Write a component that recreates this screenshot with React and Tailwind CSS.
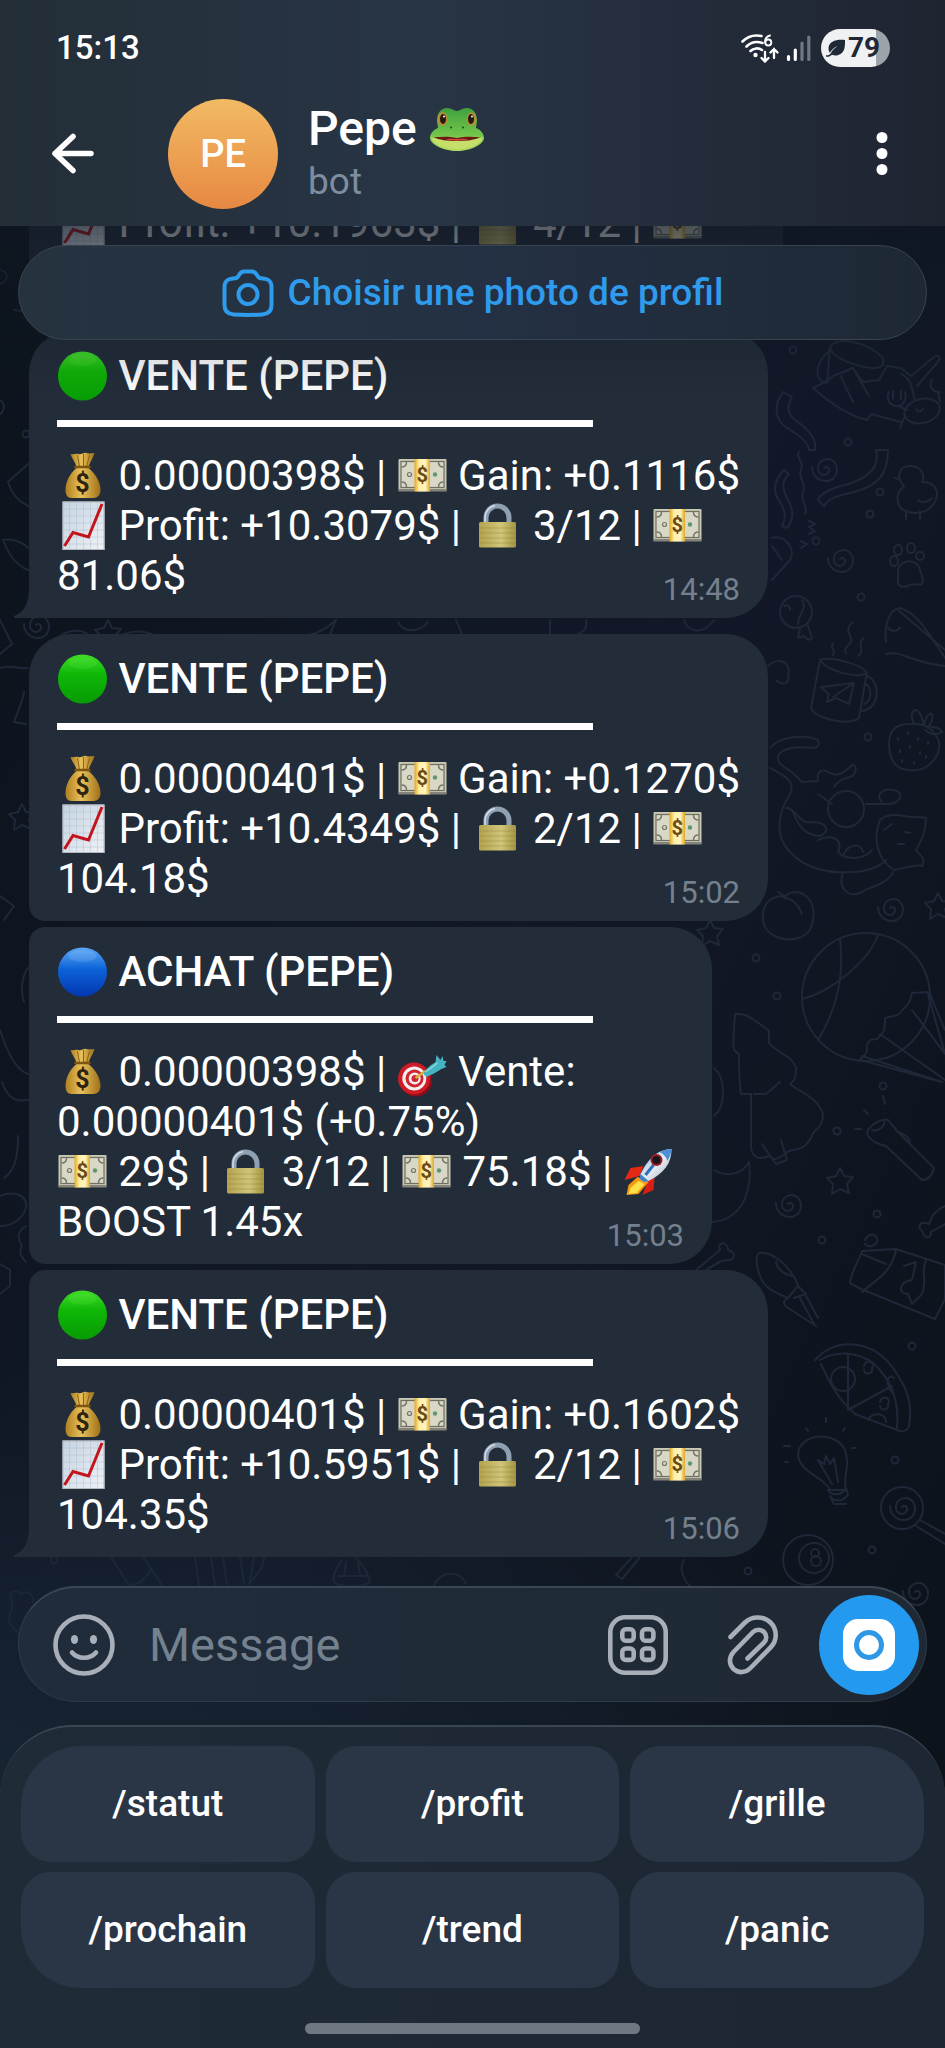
import React from 'react';

const messages = [
    // Scrolled out: only this line still shows under the header
    {
        id: 'm0',
        lines: [['chart', ' Profit: +10.1963$ | ', 'lock', ' 4/12 | ', 'cash', '     ']],
        shape: 'rounded-[42px]',
        gap: '',
    },
    {
        id: 'm1',
        dot: 'green',
        title: 'VENTE (PEPE)',
        lines: [
            ['bag', ' 0.00000398$ | ', 'cash', ' Gain: +0.1116$'],
            ['chart', ' Profit: +10.3079$ | ', 'lock', ' 3/12 | ', 'cash'],
        ],
        last: '81.06$',
        time: '14:48',
        shape: 'rounded-[42px] rounded-bl-none',
        tail: true,
        gap: 'mt-4',
    },
    {
        id: 'm2',
        dot: 'green',
        title: 'VENTE (PEPE)',
        lines: [
            ['bag', ' 0.00000401$ | ', 'cash', ' Gain: +0.1270$'],
            ['chart', ' Profit: +10.4349$ | ', 'lock', ' 2/12 | ', 'cash'],
        ],
        last: '104.18$',
        time: '15:02',
        shape: 'rounded-[42px] rounded-bl-[16px]',
        gap: 'mt-4',
    },
    {
        id: 'm3',
        dot: 'blue',
        title: 'ACHAT (PEPE)',
        lines: [
            ['bag', ' 0.00000398$ | ', 'dart', ' Vente:'],
            ['0.00000401$ (+0.75%)'],
            ['cash', ' 29$ | ', 'lock', ' 3/12 | ', 'cash', ' 75.18$ | ', 'rocket', ' '],
        ],
        last: 'BOOST 1.45x',
        time: '15:03',
        shape: 'rounded-[42px] rounded-l-[16px]',
        gap: 'mt-[6px]',
    },
    {
        id: 'm4',
        dot: 'green',
        title: 'VENTE (PEPE)',
        lines: [
            ['bag', ' 0.00000401$ | ', 'cash', ' Gain: +0.1602$'],
            ['chart', ' Profit: +10.5951$ | ', 'lock', ' 2/12 | ', 'cash'],
        ],
        last: '104.35$',
        time: '15:06',
        shape: 'rounded-[42px] rounded-tl-[16px] rounded-bl-none',
        tail: true,
        gap: 'mt-[6px]',
    },
];

const commands = [
    { label: '/statut', corner: 'rounded-tl-[60px]' },
    { label: '/profit', corner: '' },
    { label: '/grille', corner: 'rounded-tr-[60px]' },
    { label: '/prochain', corner: 'rounded-bl-[60px]' },
    { label: '/trend', corner: '' },
    { label: '/panic', corner: 'rounded-br-[60px]' },
];

const glyphs = {
    green: (
        <>
            <circle cx="25" cy="25" r="24.5" fill="url(#dotGreen)" />
            <ellipse cx="25" cy="9" rx="14" ry="6" fill="#8dff6a" opacity="0.12" />
        </>
    ),
    blue: (
        <>
            <circle cx="25" cy="25" r="24.5" fill="url(#dotBlue)" />
            <ellipse cx="25" cy="9" rx="14" ry="6" fill="#c8e4ff" opacity="0.15" />
        </>
    ),
    bag: (
        <>
            <path d="M13 3c3 1 5 -1 8 0s5 -2 8 -1 5 0 8 0c-1 5-5 9-6 14h-12c-1-5-5-9-6-13z" fill="url(#bagFill)" />
            <path d="M20 4l2 12M26 3v13M32 4l-3 12" stroke="#8a6315" strokeWidth="1" fill="none" />
            <path d="M19 17c-6 5-11 13-11 22 0 5 2 8 6 8h22c4 0 7-3 7-8 0-9-6-17-12-22z" fill="url(#bagFill)" />
            <path d="M18 16h14" stroke="#7d5510" strokeWidth="2.5" strokeLinecap="round" />
            <text x="25" y="40.5" textAnchor="middle" fontSize="25" fontWeight="700" fill="#2f2410" fontFamily="Roboto, sans-serif">$</text>
        </>
    ),
    cash: (
        <>
            <rect x="1" y="8" width="48" height="32" rx="1" fill="#c9c8b4" />
            <path d="M1 38h48v2.500h-48z" fill="#85847a" />
            <rect x="3.500" y="10.500" width="43" height="26" fill="#d9d8c6" stroke="#6f6f62" strokeWidth="1.2" />
            <path d="M4 16c4 0 5-2 5-5M46 16c-4 0-5-2-5-5M4 31c4 0 5 2 5 5M46 31c-4 0-5 2-5 5" fill="none" stroke="#77766a" strokeWidth="1.500" />
            <circle cx="12" cy="23.500" r="2" fill="none" stroke="#77766a" strokeWidth="1.200" />
            <circle cx="37.500" cy="23.500" r="2.200" fill="#5f9673" />
            <rect x="17" y="8" width="15.500" height="32.500" fill="url(#bandFill)" />
            <text x="24.800" y="31" textAnchor="middle" fontSize="20" fontWeight="700" fill="#6a4a16" fontFamily="Roboto, sans-serif">$</text>
        </>
    ),
    chart: (
        <>
            <rect x="5" y="0.500" width="42" height="48.500" fill="url(#chartFill)" />
            <path d="M12 1v48M19 1v48M26 1v48M33 1v48M40 1v48M5 8h42M5 15h42M5 22h42M5 29h42M5 36h42M5 43h42" stroke="#a9b7c6" strokeWidth="0.400" />
            <rect x="5.500" y="1" width="41" height="47.500" fill="none" stroke="#b3b8bf" />
            <path d="M7 45l8.500-13.500 15.500 4.500 13.500-33" fill="none" stroke="#c4141c" strokeWidth="3" />
        </>
    ),
    lock: (
        <>
            <path d="M13.500 23v-6.500a11.500 11.500 0 0 1 23 0v6.500" fill="none" stroke="#8fa0b2" strokeWidth="5" />
            <path d="M12.500 22v-5.500a12.500 12.500 0 0 1 10-12" fill="none" stroke="#d3deea" strokeWidth="1.500" />
            <rect x="6.500" y="21" width="37" height="25.500" rx="1.500" fill="url(#lockFill)" />
            <path d="M7 27h36M7 32h36M7 37h36M7 42h36" stroke="#8c7c33" strokeWidth="0.700" opacity="0.500" />
        </>
    ),
    dart: (
        <>
            <circle cx="18.500" cy="33.500" r="16" fill="#8f0d16" />
            <circle cx="16.500" cy="31.500" r="16" fill="#cf1a26" />
            <circle cx="16.800" cy="31.500" r="12" fill="#f3eeee" />
            <circle cx="17" cy="31.500" r="9" fill="#cf2631" />
            <circle cx="17.200" cy="31.500" r="6" fill="#f3eeee" />
            <circle cx="17.500" cy="31.500" r="3.500" fill="#cf2631" />
            <path d="M18 31l10-7" stroke="#d9b13c" strokeWidth="2.500" />
            <path d="M26 27c2-5 6-8 12-12l1-7 4 5 2-4 1 5 3 0-2 4 2 2-5 2c-5 3-10 6-15 8z" fill="#45b3c0" />
            <path d="M28 25l12-9" stroke="#8fdce4" strokeWidth="1.500" />
        </>
    ),
    rocket: (
        <>
            <path d="M20 19l-13 2-6 12 15-4z" fill="#e22a16" />
            <path d="M31 31l-1 12-11 5 5-14z" fill="#d81f14" />
            <path d="M14 30l-9 8-2 10 12-1 10-12z" fill="#f79a12" />
            <path d="M15 34l-8 7-2 6 8-1 8-9z" fill="#ffe14a" />
            <path d="M48 2c-13 1-22 7-31 25l-1 5 5 3 4-1c16-8 23-18 23-32z" fill="url(#rocketFill)" />
            <path d="M48 2c-4 0-8 1-12 3 3 1 7 5 8 9 2-4 4-8 4-12z" fill="#4d8fd6" />
            <path d="M17 27l-1 5 5 3 4-1z" fill="#3f7fc4" />
            <path d="M22 28l8-10" stroke="#2f6fb8" strokeWidth="3" />
            <circle cx="33" cy="13" r="6" fill="#9b1c24" />
            <circle cx="33" cy="13" r="4" fill="#15181f" />
        </>
    ),
    frog: (
        <>
            <path d="M8 15c0-8 4-13 10-13 5 0 7 3 10 3s5-3 10-3c6 0 10 5 10 13 0 2-1 5-1 7 5 2 8 6 8 10 0 6-13 13-27 13s-27-7-27-13c0-4 3-8 8-10 0-2-1-5-1-7z" fill="url(#frogFill)" />
            <ellipse cx="13.500" cy="13" rx="5" ry="6.800" fill="#b98d35" />
            <ellipse cx="42.500" cy="13" rx="5" ry="6.800" fill="#b98d35" />
            <ellipse cx="14" cy="13" rx="3" ry="5" fill="#231a10" />
            <ellipse cx="42" cy="13" rx="3" ry="5" fill="#231a10" />
            <circle cx="15" cy="10.500" r="1" fill="#fff" />
            <circle cx="43" cy="10.500" r="1" fill="#fff" />
            <path d="M2 31c6 3 15 1 26 2 11-1 20 1 26-2-2 9-15 12-26 12s-24-3-26-12z" fill="#c5df6a" />
            <path d="M5 31c7 0 14-1 23 1 9-2 16-1 23-1-5 3-13 4-23 4s-18-1-23-4z" fill="#6b1a14" />
            <path d="M17 33.500c4-1.500 7-.5 11-.5s7-1 11 .5c-6 1.500-16 1.500-22 0z" fill="#d8483d" />
            <circle cx="22" cy="21.500" r="1" fill="#1c4a1b" />
            <circle cx="34" cy="21.500" r="1" fill="#1c4a1b" />
        </>
    ),
};

const Emoji = ({ name, className = 'w-[51px] h-[50px]', viewBox = '0 0 50 50' }) => (
    <svg viewBox={viewBox} className={`inline-block align-top ${className}`} aria-hidden="true">
        {glyphs[name]}
    </svg>
);

// Gradients shared by every emoji
const EmojiDefs = () => (
    <svg className="absolute w-0 h-0" aria-hidden="true">
        <defs>
            <linearGradient id="dotGreen" x1="0" y1="0" x2="0" y2="1">
                <stop offset="0" stopColor="#3fdc28" />
                <stop offset="0.4" stopColor="#0fb806" />
                <stop offset="1" stopColor="#079a04" />
            </linearGradient>
            <linearGradient id="dotBlue" x1="0" y1="0" x2="0" y2="1">
                <stop offset="0" stopColor="#5ba8f5" />
                <stop offset="0.45" stopColor="#0b62d8" />
                <stop offset="1" stopColor="#0436b0" />
            </linearGradient>
            <linearGradient id="bagFill" x1="0" y1="0" x2="1" y2="0">
                <stop offset="0" stopColor="#b0801f" />
                <stop offset="0.45" stopColor="#e8c15a" />
                <stop offset="1" stopColor="#a06f18" />
            </linearGradient>
            <linearGradient id="bandFill" x1="0" y1="0" x2="1" y2="0">
                <stop offset="0" stopColor="#e3a71d" />
                <stop offset="0.3" stopColor="#fff0a8" />
                <stop offset="0.7" stopColor="#fff4c0" />
                <stop offset="1" stopColor="#e0a51c" />
            </linearGradient>
            <linearGradient id="chartFill" x1="0" y1="0" x2="1" y2="1">
                <stop offset="0" stopColor="#c4d3e2" />
                <stop offset="1" stopColor="#eff2f6" />
            </linearGradient>
            <linearGradient id="lockFill" x1="0" y1="0" x2="1" y2="0">
                <stop offset="0" stopColor="#b3a24f" />
                <stop offset="0.6" stopColor="#d0c57a" />
                <stop offset="1" stopColor="#a39440" />
            </linearGradient>
            <linearGradient id="rocketFill" x1="0" y1="0" x2="1" y2="1">
                <stop offset="0" stopColor="#5b9ad8" />
                <stop offset="0.5" stopColor="#e9eef4" />
                <stop offset="1" stopColor="#a5acb6" />
            </linearGradient>
            <linearGradient id="frogFill" x1="0" y1="0" x2="0" y2="1">
                <stop offset="0" stopColor="#3fa03c" />
                <stop offset="0.6" stopColor="#6fc44a" />
                <stop offset="1" stopColor="#b5dd60" />
            </linearGradient>
        </defs>
    </svg>
);

const spiral = 'M0 0c3-3 7 1 4 5-4 4-11 1-10-6 1-8 12-11 17-4 5 8 0 18-9 18-8 0-14-6-14-14';
const star = 'M0-12l4 8 9 1-6 7 2 9-9-4-8 5 1-10-6-6 9-2z';
const spirals = [[824, 468], [840, 559], [890, 908], [788, 1204], [902, 1507], [915, 1592], [36, 625]];
const stars = [[710, 932], [840, 1180], [22, 816], [938, 905], [108, 632]];
const rings = [[793, 350], [848, 442], [880, 492], [870, 514], [816, 541], [861, 597], [868, 737], [756, 958], [777, 996], [837, 1131], [883, 1086], [877, 1214], [822, 1240], [912, 1346], [895, 1460], [872, 1550], [748, 1571], [26, 434], [54, 1560]];

const Wallpaper = () => (
    <svg
        viewBox="0 0 945 2048"
        preserveAspectRatio="xMidYMin slice"
        className="absolute inset-0 w-full h-full text-[#1f2838]"
        fill="none"
        stroke="currentColor"
        strokeWidth="2"
        strokeLinecap="round"
        strokeLinejoin="round"
        aria-hidden="true"
    >
        {spirals.map(([x, y]) => <path key={`s${x}-${y}`} d={spiral} transform={`translate(${x} ${y})`} />)}
        {stars.map(([x, y]) => <path key={`t${x}-${y}`} d={star} transform={`translate(${x} ${y})`} />)}
        {rings.map(([x, y]) => <circle key={`r${x}-${y}`} cx={x} cy={y} r="3.5" />)}

        {/* Pelican and crab */}
        <path d="M830 347c8-12 38-4 52 10 4 8-2 12-10 11-18-2-40-10-42-21zM830 347l-3 36M827 383c-12 0-14-18 2-32M833 376l20-8 10 14 16-2 8-14 14 2 10 8 24-20c4-2 6 2 3 6l-21 24M833 376c-6 6-12 8-20 12 16 14 36 28 54 32l4-6 30 8M853 368l16 28M841 376c4 10 8 18 12 26M901 374c12 6 10 14 14 26" />
        <ellipse cx="922" cy="411" rx="18" ry="12" transform="rotate(-14 922 411)" />
        <path d="M889 392c-4 8 2 14 8 14s10-6 8-14M893 391v8M901 391v8M899 406l8 4M932 380c-4 8 2 12 8 12M938 392l2 10M904 418l-4 10M916 409c2 3 5 3 7 0" />

        {/* Ribbons */}
        <path d="M783 392c-10 14-8 28 4 36 14 8 22 16 22 22h6c2-12-8-22-20-30-8-6-8-14-3-23zM799 452c-4 6 6 10 2 18s6 12 2 22 6 14 2 22M876 450c4 18-8 28-28 34-16 4-26 8-30 16l6 6c4-8 14-10 30-14 24-6 34-18 34-42zM784 470c-10 10-12 22-4 32 6 10 6 16 2 24l5 2c8-10 6-20 0-30-6-12-4-18 2-24z" />

        {/* Duckling */}
        <path d="M904 486c-8-8-6-20 6-20 10 0 16 8 12 16 16 0 20 14 8 26-10 8-30 6-32-6-2-8 2-12 6-16zM901 480l-6-2M918 500c4 4 10 2 14-2M906 511v8M920 511v8" />

        {/* Squiggles and carrot */}
        <path d="M809 521l6 3-6 3 6 4-6 3M801 541l6 3-6 4M772 538c12-4 24 10 18 22l-18 20M772 546l10 14" />

        {/* Paw */}
        <path d="M898 572c0-14 20-14 22-2 2 6 4 8 2 14-6 2-10-2-14 2-6 2-10 0-10-4z" />
        <ellipse cx="894" cy="561" rx="4" ry="5" />
        <ellipse cx="898" cy="550" rx="4" ry="5" />
        <ellipse cx="911" cy="548" rx="4" ry="5" />
        <ellipse cx="920" cy="556" rx="4" ry="4" />

        {/* Candy and party hat */}
        <circle cx="796" cy="612" r="16" />
        <path d="M784 606c4-2 6 0 6 4M802 600c6 8-4 14-4 24M800 628l-2 10 6-2 4 4 4-2-4-12M886 642c-2-18 4-34 14-34 16 4 28 24 45 50M898 610l47 40M888 628c4 4 8 4 12 0M886 654c16-4 22 8 59 12" />

        {/* Mug */}
        <path d="M820 660c10-4 42 4 47 13-10 6-40-2-47-13zM820 660l-9 48c6 12 40 18 48 10l8-46M866 676c14 2 16 32-4 35M866 684c6 4 6 18-2 20M821 687l33-4-5 21-13-6-9 4 2-8zM833 697l21-14M833 655c4-6-4-6 0-12M846 654c-4-8 8-10 5-16-4-8-4-12 2-16M858 656c8-6-2-10 5-18" />

        {/* Strawberry */}
        <path d="M889 744c0-12 6-20 20-20 16-2 26 6 30 18 2 12-8 26-22 28-18 2-28-6-28-26zM914 724c-4-8-2-14 2-14 6 2 6 10 8 14 2-8 6-12 8-10 2 6-2 10-4 14 8-2 12 0 14 4-6 4-12 2-17-2" />
        <path d="M898 738v2M908 732v2M918 738v2M928 742v2M900 750v2M910 746v2M920 752v2M902 760v2M914 762v2M926 756v2" />

        {/* Cat */}
        <path d="M770 748c10-12 34-14 48-8 2 4 0 8-6 8-16-2-30 0-34 8-2 10 10 10 24 26l16-1c-2-12 6-12 12-8 8 4 14 0 22-8 6 0 4 10-2 12-8 2-12 4-16 10" />
        <path d="M770 768c16 8 26 14 20 26-12 18-16 42 0 58 14 16 40 22 60 20 16 0 28-4 36-12M786 808c8-2 14 18 26 14 16 0 18 10 8 14-14 0-22-10-28-26M818 794l14 10" />
        <circle cx="846" cy="809" r="18" />
        <path d="M866 804l24 0c12-2 14-12 4-14-10-2-20 4-12 12M880 820c-8 20-2 40 14 50 12-2 20-6 28-4 4-8 0-8-6-16 4-8 10-16 10-32-8-2-14 0-22-2-10-2-18-2-24 4zM884 830l8-6M904 832l6 1M898 844h6M818 840c12-6 26-2 20 12 10 10 28 6 34-2M843 872c-6 20 10 28 22 18 10-4 24-8 28-18M843 856c4-12 18-14 20-4" />

        {/* Peach */}
        <path d="M784 896c-18 0-24 14-20 28 4 16 34 22 46 6 8-20 2-34-12-38-8 0-12 2-14 6 8 0 14 6 18 16M784 896l-6-4" />

        {/* Beach ball and parachute */}
        <circle cx="866" cy="997" r="64" />
        <path d="M840 939c4 36-2 68-22 101M878 935c-10 28-50 58-76 64M912 993c-2 10-4 12-9 16-4 10-18 6-18 10 0 14-2 14-8 20-12 0-10 8-10 12-4 10-8 6-8 10M912 993l17 -1 16 38M928 994l17 60M912 1010l33 44M880 1034l65 46M860 1060l82 22M862 1056l80 26" />

        {/* Tree */}
        <path d="M740 1014c8 0 20 10 29 17v12c8 10 22 12 27 24 0 12-2 14-6 17 10 8 28 14 33 30 0 16-10 14-12 24-8 14-16 10-24 14-8 6-12 10-18 4-10 4-16 2-18-8v-54h-10c-2-12-2-22-2-40-8-4-6-8-4-40zM754 1094h12l14-12M762 1144l14 20 11-4-6-20" />

        {/* Torch */}
        <path d="M868 1136c-4-8 12-18 20-16l10 12 36 36c-2 8-6 12-12 12l-36-34c-8-2-14-4-18-10zM872 1130c6 2 14-4 12-10M898 1132c6 2 10 4 12 10M883 1096l2 8M864 1110l4 4M855 1129h6" />

        {/* Moon and bones */}
        <path d="M714 1170c14 8 28 4 35-8 4 34-10 58-37 60M714 1068c12 10 12 38 0 48M696 1270l24-20c-4-8 8-10 8 0 10 2 6 12-2 10-4 0-4 0-26 14M945 1206c-12 6-14 12-16 18-10-4-12 4-6 8 0 6 8 8 8 0l14-8M768 666c10-10 24-4 20 10 2 8-6 10-12 4" />

        {/* Small rocket */}
        <path d="M758 1254c6-4 16 2 24 8 8 8 14 16 16 24l-10 12c-14-6-24-10-28-22-4-10-4-18-2-22zM798 1286l8 8-12 4M788 1298c-8 4-2 8 0 10l28 18M800 1298l14 26M806 1296l12 22M776 1262c2 10 10 12 16 14" />

        {/* Map */}
        <path d="M850 1283c2-14 8-20 12-32l34 -2 49 16v34l-10 20-74-30zM896 1250c-4 22-20 30-34 42M862 1254l24 10M904 1266l12-4-4 18c-14 2-14 14-4 14l4 10 10-10c6-14-2-20 4-34M865 1240c4-8 12-6 12 0s-8 8-12 4" />

        {/* Pizza */}
        <path d="M815 1360c20-22 56-22 78 8 14 20 20 34 16 58-2 6-8 6-12 4l-42-16c-16-14-24-28-34-50M820 1360c16-10 36-8 52 2 16 14 28 34 25 66M848 1354v56M848 1410l44-24" />
        <circle cx="843" cy="1379" r="12" />
        <path d="M864 1366c2-8 12-4 8 2 2 6-8 8-8 2M880 1402c2-8 12-4 8 2 2 6-8 8-8 2M868 1420c4-8 18-8 18 2M894 1378c-8-6-8 8-2 14" />

        {/* Light bulb */}
        <path d="M830 1490c-4-12-32-18-32-36 2-20 34-24 46-6 8 18-2 26 2 42zM828 1490c4 6 14 6 18-2l2 6c-4 8-14 8-18 2l4 8h12M832 1484l-14-24 6 4 2-8 4 8 4-6 4 24M826 1418v4M806 1428l2 3M845 1428l-2 3M784 1446h6M852 1448h3M785 1462h3" />

        {/* Lollipop */}
        <circle cx="902" cy="1508" r="21" />
        <path d="M920 1520l25 14M916 1526l29 18" />

        {/* Billiard ball */}
        <circle cx="808" cy="1560" r="25" />
        <circle cx="814" cy="1558" r="15" />
        <circle cx="815" cy="1553" r="4" />
        <circle cx="816" cy="1561" r="5" />

        {/* Row between the last message and the text field */}
        <path d="M111 1557l18 28M143 1557l20 30M129 1585c12 0 18-8 22-16M195 1557l4 28M211 1557l4 28M223 1557l4 28M240 1557l4 26M254 1557l-4 24M264 1557c0 12-8 18-16 28M342 1560c-6 8-10 16-8 22 6 6 28 6 36 0-2-10-8-18-14-24M338 1576h28M346 1562l-2 14M358 1562l2 12M434 1586c4-14 26-18 32-2M632 1557l-16 18 6 4 18-22M684 1560c-6 8 0 20 6 26M9 1622c0-12 6-14 2-24-2-8 6-8 10-4 6-4 14 0 12 8M9 1622c4 8 10 12 18 14" />

        {/* Left edge */}
        <path d="M0 620l12 24-12 10M0 668c14-4 20 2 28 0M24 692c-2 12-8 24-10 30l12 2M8 482l20-18M8 482c4 14 12 20 20 24M3 540c8-2 20 2 25 8M4 542c6 16 14 24 24 28M0 270c10 2 8 12 0 14M0 400c6 4 4 12 0 14M14 310l14 2M0 896l14 10-10 14M28 968c-6 8-8 22-4 34M0 1030c8 24 16 40 28 44M2 1082c6 16 12 20 26 18M18 1136c0 18-2 34-14 42M0 1196c16-6 28 0 26 12-4 12-14 18-26 18M26 1226c-10 6-8 14-4 20-4 6 0 12 4 16M0 1264l10 6v16l-10 8" />

        {/* Strip between the first two messages */}
        <path d="M60 636c12-8 24-6 30 0M120 636c12-6 24-6 36 0M300 636c16 0 30-10 36-16M330 634l6-14M398 622c6 12 22 10 30 0M456 620l6 14M550 620v14M586 620c2 10-4 12-8 14M684 620c4 12 18 16 30 0" />
    </svg>
);

const Message = ({ message }) => (
    <article className={`relative w-fit shrink-0 bg-[#222d39] px-[28px] pt-5 pb-[17px] ${message.shape} ${message.gap}`}>
        {message.tail && (
            <svg viewBox="0 0 16 30" className="absolute -left-[15px] bottom-0 w-4 h-[30px]" aria-hidden="true">
                <path d="M15 0c0 14-4 24-15 28v2h16v-30z" fill="#222d39" />
            </svg>
        )}
        {message.title && (
            <>
                <h2 className="font-medium whitespace-pre">
                    <Emoji name={message.dot} />
                    {' ' + message.title}
                </h2>
                <hr className="mt-[19px] mb-6 w-[536px] h-[7px] border-0 bg-white" />
            </>
        )}
        {message.lines.map((line, i) => (
            <p key={i} className="whitespace-pre">
                {line.map((part, j) => (glyphs[part] ? <Emoji key={j} name={part} /> : part))}
            </p>
        ))}
        <div className="flex items-end justify-between min-h-[50px]">
            {message.last && <p>{message.last}</p>}
            {message.time && <time className="text-[31px] leading-[22px] text-[#74808d]">{message.time}</time>}
        </div>
    </article>
);

const StatusBar = () => (
    <div className="flex items-center h-[38px] pl-[56px] pr-[55px] text-white">
        <span className="text-[33px] font-medium">15:13</span>
        <div className="ml-auto flex items-center">
            <svg viewBox="0 0 38 30" className="w-[38px] h-[30px]" fill="none" stroke="currentColor" strokeWidth="2.6" strokeLinecap="round" aria-hidden="true">
                <path d="M1.500 8.500c5-5 12-7 19-5.500M5.500 13.500c4-4 10-5.500 16-3.500M9.500 18c3-3 8-3.500 11.500-1" />
                <circle cx="14.500" cy="22" r="2.200" fill="currentColor" stroke="none" />
                <path d="M29 2.500c-3.500 1-5 4-5 6.500" strokeWidth="1.900" />
                <circle cx="27.300" cy="9.500" r="3" strokeWidth="1.900" />
                <path d="M24 19v9M20.500 25l3.500 3.500 3.500-3.500M33 25v-9M29.500 19.500l3.500-3.500 3.500 3.500" strokeWidth="2.300" />
            </svg>
            <svg viewBox="0 0 26 28" className="ml-[7px] w-[26px] h-7" strokeWidth="3.200" strokeLinecap="round" aria-hidden="true">
                <path d="M2.500 22.500v3M9.300 16v9.500" stroke="#fff" />
                <path d="M16 9v16.500M22.800 3v22.500" stroke="#6f7783" />
            </svg>
            <div className="ml-[9px] w-[69px] h-[38px] rounded-full flex items-center pl-[5px] bg-linear-to-r from-[#eff1f3] from-79% to-[#9da3ab] to-79% text-[#1f2836]">
                <svg viewBox="0 0 20 20" className="w-5 h-5" aria-hidden="true">
                    <path d="M19 2c-8-1-16 1-16.500 8 0 2 .5 3.500 1.300 4.800 2-3.500 5-5.800 8-6.800-3.500 2-6 4.800-7.500 8-1 1-2.300 1.500-4.300 1.300v1.500c3 .2 4.600-.6 6-2 5 2 10-.3 12-5 1.200-3 1-6.500 1-9.800z" fill="currentColor" />
                </svg>
                <span className="ml-[2px] text-[28px] leading-8 font-bold">79</span>
            </div>
        </div>
    </div>
);

const Header = () => (
    <header className="relative z-20 shrink-0 pt-[29px] pb-[17px] bg-linear-to-r from-[#232e37] via-[#283545] via-45% to-[#1f2431]">
        <StatusBar />
        <div className="mt-8 flex items-center pl-12 pr-[38px]">
            <button type="button" aria-label="Retour" className="text-white">
                <svg viewBox="0 0 50 50" className="w-[50px] h-[50px]" fill="none" stroke="currentColor" strokeWidth="5.500" strokeLinecap="round" strokeLinejoin="round">
                    <path d="M43 24.500h-36M25 7.500l-18 17 18 17" />
                </svg>
            </button>
            <div className="ml-[70px] w-[110px] h-[110px] rounded-full bg-linear-to-b from-[#f2ba63] to-[#e68842] flex items-center justify-center text-white text-[38px] font-medium">
                PE
            </div>
            <div className="ml-[30px]">
                <h1 className="flex items-center text-[48px] leading-[56px] font-medium text-white">
                    Pepe
                    <Emoji name="frog" className="ml-3 w-14 h-[46px]" viewBox="0 0 56 46" />
                </h1>
                <p className="text-[37px] leading-[50px] text-[#7c8e9f]">bot</p>
            </div>
            <button type="button" aria-label="Menu" className="ml-auto text-white">
                <svg viewBox="0 0 50 50" className="w-[50px] h-[50px]" fill="currentColor">
                    <circle cx="25" cy="8.500" r="5.500" />
                    <circle cx="25" cy="24.500" r="5.500" />
                    <circle cx="25" cy="40.500" r="5.500" />
                </svg>
            </button>
        </div>
    </header>
);

const Composer = () => (
    <form className="relative shrink-0 mx-[18px] h-[116px] flex items-center pl-[34px] pr-[7px] rounded-full border border-t-2 border-[#2f3b48] border-t-[#3b4754] bg-linear-to-r from-[#202c3b] to-[#1f2935] text-[#a9afb8]">
        <button type="button" aria-label="Emoji">
            <svg viewBox="0 0 62 62" className="w-[62px] h-[62px]" fill="none" stroke="currentColor" strokeWidth="4.600" strokeLinecap="round">
                <circle cx="31" cy="31" r="28.500" />
                <ellipse cx="21.500" cy="25.500" rx="3.600" ry="4.600" fill="currentColor" stroke="none" />
                <ellipse cx="40.500" cy="25.500" rx="3.600" ry="4.600" fill="currentColor" stroke="none" />
                <path d="M19 38.500c6 7 18 7 24 0" />
            </svg>
        </button>
        <input
            type="text"
            aria-label="Message"
            placeholder="Message"
            className="ml-[34px] flex-1 min-w-0 bg-transparent outline-none text-[47px] leading-[56px] text-white placeholder:text-[#74818f]"
        />
        <button type="button" aria-label="Commandes">
            <svg viewBox="0 0 60 60" className="w-[60px] h-[60px]" fill="none" stroke="currentColor" strokeWidth="4.600">
                <rect x="2.300" y="2.300" width="55.400" height="55.400" rx="15" />
                <rect x="14.300" y="14.300" width="11.400" height="11.400" rx="3.500" />
                <rect x="34" y="14.300" width="11.400" height="11.400" rx="3.500" />
                <rect x="14.300" y="33.500" width="11.400" height="11.400" rx="3.500" />
                <rect x="34" y="33.500" width="11.400" height="11.400" rx="3.500" />
            </svg>
        </button>
        <button type="button" aria-label="Joindre" className="ml-14">
            <svg viewBox="0 0 60 60" className="w-[60px] h-[60px]" fill="none" stroke="currentColor" strokeWidth="4.600" strokeLinecap="round">
                <path d="M6.500 22l14.500-14.500c7-7 19-6.500 25.500 0 7 7 7 18 0 25l-20 20.500c-5 5-12 5.500-17 1-5-5-4.500-12 0-17l19.500-20c3-3 8-3 11 0s3 7.500 0 10.500l-16.500 16" />
            </svg>
        </button>
        <button type="button" aria-label="Vidéo" className="ml-[35px] w-[100px] h-[100px] rounded-full bg-[#239af0] flex items-center justify-center">
            <svg viewBox="0 0 52 52" className="w-[52px] h-[52px]">
                <rect width="52" height="52" rx="15" fill="#fff" />
                <circle cx="26" cy="26" r="12.500" fill="none" stroke="#2f98e6" strokeWidth="5" />
            </svg>
        </button>
    </form>
);

const App = () => {
    return (
        <div className="relative h-screen flex flex-col overflow-hidden bg-linear-to-br from-[#0b131a] via-[#121828] via-50% to-[#0c1218] font-['Roboto',sans-serif]">
            <EmojiDefs />
            <Wallpaper />
            {/* Lighter corner under the text field */}
            <div className="absolute inset-x-0 bottom-0 h-[700px] bg-radial-[at_0%_70%] from-[#182634] to-transparent to-70%" />
            <Header />

            <main className="relative flex-1 min-h-0">
                <div className="h-full overflow-hidden flex flex-col justify-end pl-[29px] pb-[29px] text-[42px] leading-[50px] text-white">
                    {messages.map((message) => (
                        <Message key={message.id} message={message} />
                    ))}
                </div>
                <div className="absolute inset-x-0 top-0 h-[170px] bg-linear-to-b from-[#0f1723]/70 via-[#0f1723]/30 to-transparent pointer-events-none" />
                <a
                    href="#photo"
                    className="absolute top-[19px] inset-x-[18px] h-[95px] flex items-center justify-center rounded-full border border-[#374450] bg-linear-to-r from-[#26333f] via-[#243144] to-[#1e2835] text-[37px] font-medium text-[#2f9bec]"
                >
                    <svg viewBox="0 0 52 48" className="mr-[14px] w-[52px] h-12" fill="none" stroke="currentColor" strokeWidth="4" strokeLinejoin="round" aria-hidden="true">
                        <path d="M11 9.500c4 0 4.500-1 6-3.500s3-3.500 5-3.500h8c2 0 3.500 1 5 3.500s2 3.500 6 3.500c5 0 8.500 3 8.500 8v18.500c0 6-3 9-9 9.500-9 .600-20 .600-29 0-6-.500-9-3.500-9-9.500v-18.500c0-5 3.500-8 8.500-8z" />
                        <circle cx="26" cy="25.500" r="9.500" />
                    </svg>
                    Choisir une photo de profil
                </a>
            </main>

            <Composer />

            <section className="relative shrink-0 mt-[23px] px-[21px] pt-[19px] pb-[14px] rounded-t-[72px] border-t-2 border-[#3b4653] bg-linear-to-r from-[#1f2b37] to-[#1d2633]">
                <div className="grid grid-cols-3 gap-x-[11px] gap-y-[10px]">
                    {commands.map((command) => (
                        <button
                            key={command.label}
                            type="button"
                            className={`h-[116px] rounded-[30px] bg-[#2a3645] text-[37px] font-medium text-white ${command.corner}`}
                        >
                            {command.label}
                        </button>
                    ))}
                </div>
                <div className="mt-[35px] mx-auto w-[37%] h-[11px] rounded-full bg-[#6f7782]" />
            </section>
        </div>
    );
};

export default App;
